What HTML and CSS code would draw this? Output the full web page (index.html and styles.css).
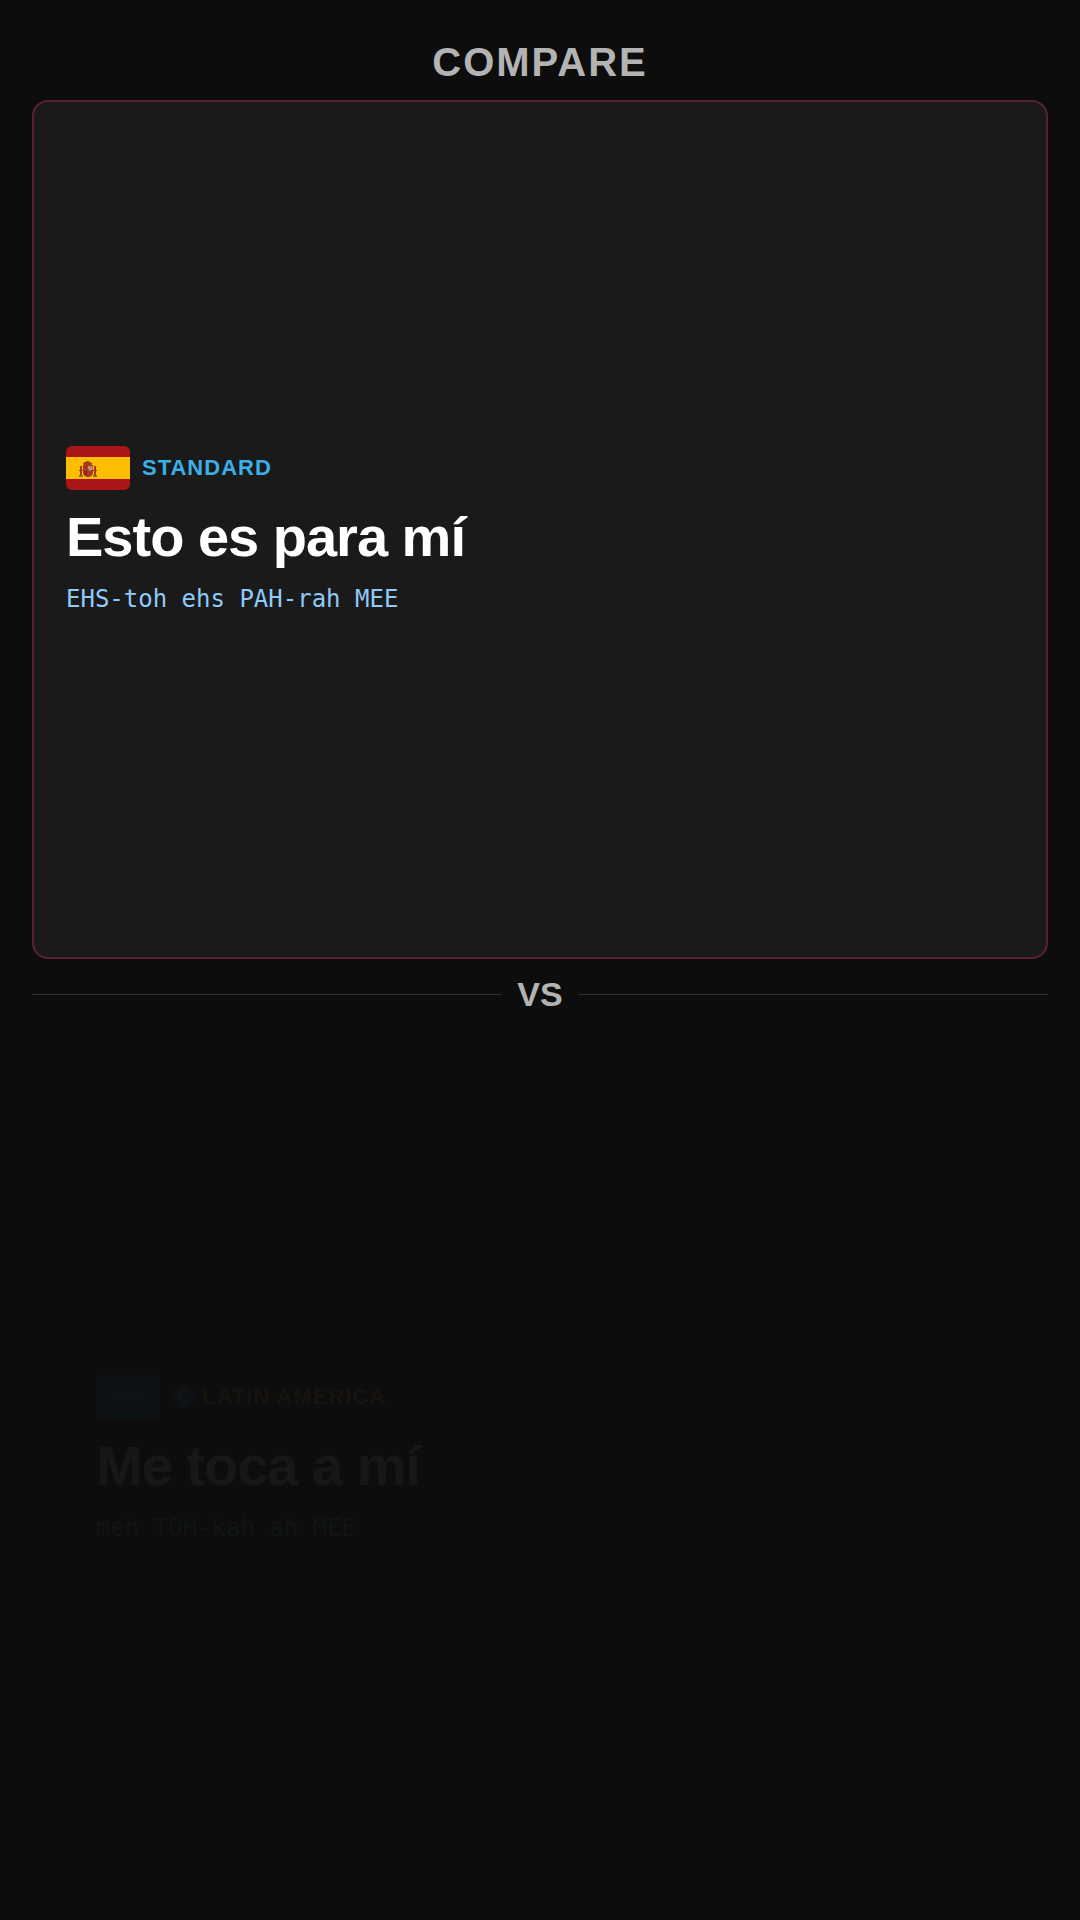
FILE: index.html
```html
<!doctype html>
<html lang="en">
<head>
    <meta charset="UTF-8">
    <meta name="viewport" content="width=device-width, initial-scale=1">
    <title>Compare</title>
    <link rel="stylesheet" href="styles.css">
</head>
<body>
<main class="compare">
    <h1 class="heading">COMPARE</h1>

    <section class="card">
        <div class="region">
            <svg class="flag" viewBox="0 0 64 44" aria-hidden="true">
                <rect width="64" height="44" fill="#ab1518"/>
                <rect y="11" width="64" height="22" fill="#fcbd02"/>
                <!-- coat of arms -->
                <g fill="#a8391c">
                    <path d="M17 17q4-3 9 0l-1 3h-7z"/>
                    <path d="M17 19h10v8q-1 4-5 4t-5-4z"/>
                    <rect x="14" y="20" width="2" height="9"/>
                    <rect x="28" y="20" width="2" height="9"/>
                    <rect x="13" y="24" width="5" height="1"/>
                    <rect x="26" y="24" width="5" height="1"/>
                </g>
                <path d="M13 29h4v2h-4zM27 29h4v2h-4z" fill="#8a6a3c"/>
                <path d="M20 15h3v1h-3z" fill="#8a5a20"/>
                <path d="M22 20h4l1 3-3 2-2-1z" fill="#c9867c"/>
                <path d="M18 25h3v4h-2z" fill="#8c2416"/>
                <circle cx="22" cy="24" r="1" fill="#5c4a78"/>
            </svg>
            <span class="region-name standard">STANDARD</span>
        </div>
        <h2 class="phrase">Esto es para mí</h2>
        <p class="sound">EHS-toh ehs PAH-rah MEE</p>
    </section>

    <div class="versus">VS</div>

    <section class="card entering">
        <div class="region">
            <svg class="flag" viewBox="0 0 64 44" aria-hidden="true">
                <rect width="64" height="44" fill="#0684b5"/>
                <g fill="#5fa0bc">
                    <rect x="16" y="17" width="30" height="6"/>
                    <rect x="33" y="17" width="4" height="14"/>
                </g>
            </svg>
            <span class="region-name latin">
                <svg class="globe" viewBox="0 0 24 24" aria-hidden="true">
                    <circle cx="12" cy="12" r="11" fill="#1c7fb8"/>
                    <path d="M5 5q5-4 10-3l-1 4-4 3 1 3 5 2-1 4-3 4-2-6-4-5z" fill="#8fb7a0"/>
                </svg>
                LATIN AMERICA
            </span>
        </div>
        <h2 class="phrase">Me toca a mí</h2>
        <p class="sound teal">meh TOH-kah ah MEE</p>
    </section>
</main>
</body>
</html>
```

FILE: styles.css
```css
* {
    box-sizing: border-box;
    margin: 0;
}
body {
    background: #0d0d0d;
    color: #fff;
    font-family: "Liberation Sans", Arial, sans-serif;
}
.compare {
    display: flex;
    flex-direction: column;
    min-height: 100vh;
    padding: 40px 32px 32px;
    overflow: hidden;
}
.heading {
    margin-bottom: 16px;
    color: #b3b3b3;
    font-size: 40px;
    line-height: 44px;
    letter-spacing: 2px;
    text-align: center;
}
.card {
    flex: 1;
    display: flex;
    flex-direction: column;
    justify-content: center;
    gap: 16px;
    padding: 32px;
    background: #1a1a1a;
    border: 2px solid #5c2034;
    border-radius: 16px;
}
/* second card is at the start of its slide-in */
.entering {
    background: none;
    border-color: transparent;
    opacity: 0.04;
    transform: translateX(30px);
}
.region {
    display: flex;
    align-items: center;
    gap: 12px;
}
.flag {
    width: 64px;
    height: 44px;
    border-radius: 6px;
}
.region-name {
    display: flex;
    align-items: center;
    gap: 6px;
    font-size: 22px;
    font-weight: bold;
    letter-spacing: 1px;
}
.standard {
    color: #3bb0e8;
}
.latin {
    color: #ffa726;
}
.globe {
    width: 24px;
    height: 24px;
}
.phrase {
    font-size: 56px;
    line-height: 62px;
    letter-spacing: -1px;
}
.sound {
    color: #90caf9;
    font-family: "DejaVu Sans Mono", Menlo, monospace;
    font-size: 24px;
    line-height: 30px;
}
.teal {
    color: #4fb3bf;
}
.versus {
    display: flex;
    align-items: center;
    gap: 16px;
    padding: 16px 0;
    color: #b3b3b3;
    font-size: 34px;
    font-weight: bold;
    line-height: 38px;
}
.versus::before,
.versus::after {
    content: "";
    flex: 1;
    height: 1px;
    background: #333;
}
```
